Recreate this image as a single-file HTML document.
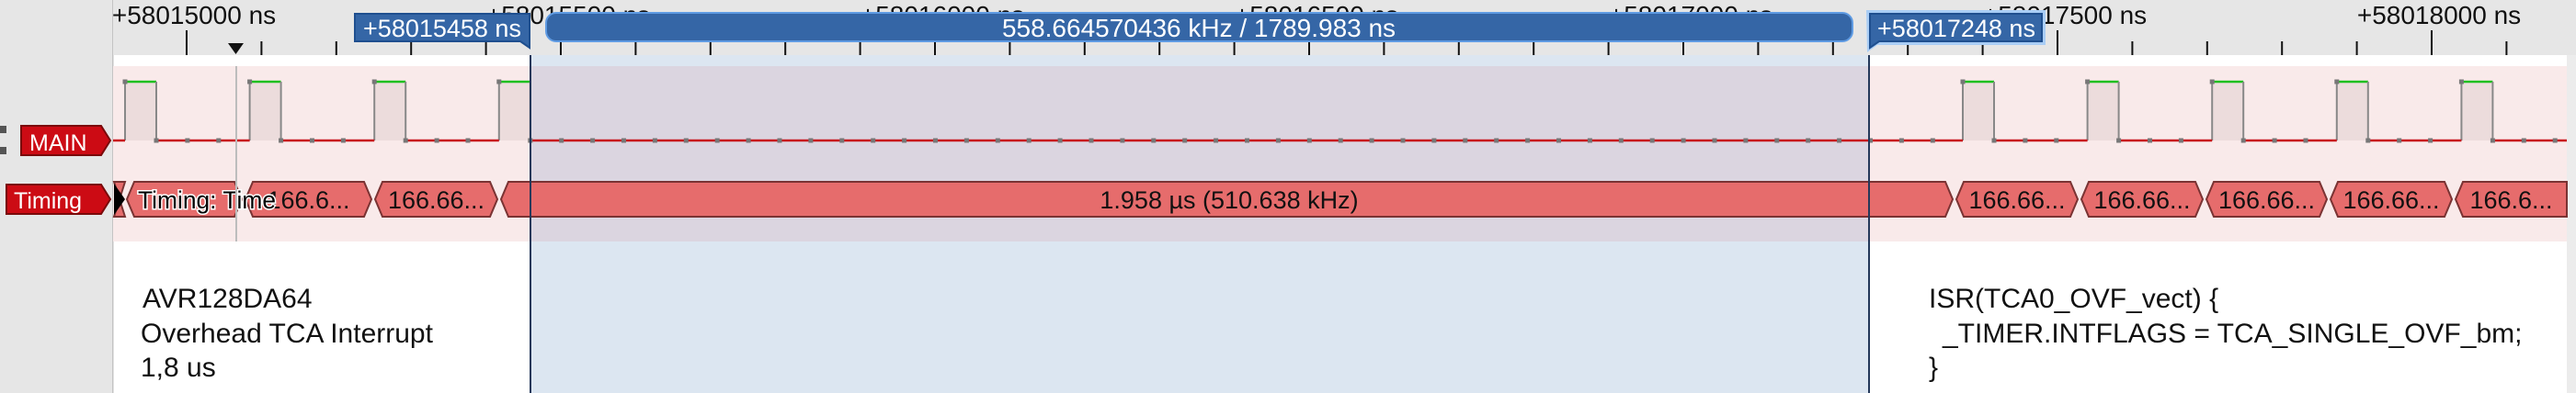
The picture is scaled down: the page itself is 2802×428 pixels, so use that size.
<!DOCTYPE html>
<html><head><meta charset="utf-8"><style>
html,body{margin:0;padding:0;width:2802px;height:428px;overflow:hidden;background:#fff}
svg{display:block;font-family:"Liberation Sans",sans-serif}
</style></head><body>
<svg id="s" width="2802" height="428" xmlns="http://www.w3.org/2000/svg">
<rect width="2802" height="428" fill="#fff"/>
<rect x="0" y="0" width="123" height="428" fill="#e6e6e6"/>
<rect x="122" y="0" width="1.5" height="428" fill="#c4c4c4"/>
<rect x="123" y="0" width="2679" height="60" fill="#e6e6e6"/>
<rect x="2792" y="60" width="10" height="368" fill="#ececec"/>
<rect x="123" y="72" width="2669" height="191" fill="#f9eaea"/>
<rect x="577" y="60" width="1456" height="368" fill="#dce6f1"/>
<rect x="577" y="72" width="1456" height="191" fill="#dbd5e0"/>
<g id="ticks"></g>
<g id="sig"></g>
<rect x="0" y="137" width="7" height="8" fill="#555"/>
<rect x="0" y="160" width="7" height="8" fill="#555"/>
<path d="M23 137 H110 L120 153 L110 169 H23 Z" fill="#cc0b14" stroke="#7a0a0a" stroke-width="2"/>
<text x="32" y="164" font-size="25" fill="#fff">MAIN</text>
<path d="M7 201 H110 L120 217 L110 233 H7 Z" fill="#cc0b14" stroke="#7a0a0a" stroke-width="2"/>
<text x="15" y="227" font-size="25" fill="#fff">Timing</text>
<g id="tim"></g>
<g id="timt"></g>
<rect x="256" y="72" width="2" height="191" fill="#bdbdbd"/>
<path d="M248 47 H265 L256.5 59 Z" fill="#111"/>
<rect x="576" y="60" width="2" height="368" fill="#24385a"/>
<rect x="2032" y="60" width="2" height="368" fill="#24385a"/>
<rect x="594" y="14" width="1421" height="31" rx="11" fill="#3566a6" stroke="#5f9be3" stroke-width="2"/>
<text x="1304" y="40" font-size="28" fill="#fff" text-anchor="middle">558.664570436 kHz / 1789.983 ns</text>
<path d="M386 15 H576 V52 L566 45 H386 Z" fill="#3566a6" stroke="#1f4f8f" stroke-width="2"/>
<text x="481" y="40" font-size="27" fill="#fff" text-anchor="middle">+58015458 ns</text>
<path d="M2030 11 H2225 V49 H2042 L2031 57 Z" fill="#a9cdf5"/>
<path d="M2034 15 H2221 V45 H2044 L2034 52 Z" fill="#3566a6" stroke="#1f4f8f" stroke-width="2"/>
<text x="2128" y="40" font-size="27" fill="#fff" text-anchor="middle">+58017248 ns</text>
<g font-size="30" fill="#111">
<text x="155" y="335">AVR128DA64</text>
<text x="153" y="373">Overhead TCA Interrupt</text>
<text x="153" y="410">1,8 us</text>
<text x="2098" y="335">ISR(TCA0_OVF_vect) {</text>
<text x="2113" y="373">_TIMER.INTFLAGS = TCA_SINGLE_OVF_bm;</text>
<text x="2098" y="410">}</text>
</g>
</svg>
<script>
var NS="http://www.w3.org/2000/svg";
function el(p,t,a,txt){var e=document.createElementNS(NS,t);for(var k in a)e.setAttribute(k,a[k]);if(txt!=null)e.textContent=txt;document.getElementById(p).appendChild(e);return e;}
for(var i=-1;i<40;i++){var x=203+i*81.4;if(x<124||x>2790)continue;var maj=((i%5)+5)%5==0;
el("ticks","rect",{x:x-1,y:maj?33:45,width:2,height:maj?27:15,fill:"#111"});}
for(var j=0;j<7;j++){var x=203+j*407;if(x>2790)continue;el("ticks","text",{x:x+8,y:26,"font-size":28,fill:"#111","text-anchor":"middle"},"+"+(58015000+j*500)+" ns");}
var P=[136,271.6,407.2,542.8,2135,2270.6,2406.2,2541.8,2677.4],W=34,HY=89,LY=153;
for(var i=0;i<P.length;i++){var a=P[i],b=a+W;
el("sig","rect",{x:a,y:HY,width:W,height:LY-HY,fill:"#ecdcdc"});
el("sig","line",{x1:a,y1:HY,x2:b,y2:HY,stroke:"#1fbf1f","stroke-width":2.5});
el("sig","line",{x1:a,y1:HY,x2:a,y2:LY,stroke:"#888","stroke-width":2});
el("sig","line",{x1:b,y1:HY,x2:b,y2:LY,stroke:"#888","stroke-width":2});}
var segs=[[123,136]];for(var i=0;i<P.length;i++){segs.push([P[i]+W,i+1<P.length?P[i+1]:2792]);}
segs.forEach(function(s){el("sig","line",{x1:s[0],y1:LY,x2:s[1],y2:LY,stroke:"#c8101a","stroke-width":2.5});});
for(var i=0;i<P.length;i++)el("sig","rect",{x:P[i]-2.5,y:HY-2.5,width:5,height:5,fill:"#777"});
segs.forEach(function(s){for(var x=s[0];x<s[1]-5;x+=33.9){if(x<130)continue;el("sig","rect",{x:x-2.5,y:LY-2.5,width:5,height:5,fill:"#777"});}});
var B=[[136,265,"Timing: Time"],[265,406,"166.6..."],[406,543,"166.66..."],[543,2126,"1.958 µs (510.638 kHz)"],[2126,2262,"166.66..."],[2262,2398,"166.66..."],[2398,2533,"166.66..."],[2533,2669,"166.66..."],[2669,2800,"166.6..."]];
el("tim","path",{d:"M124 198 L130 217 L124 236 L136 236 L130 217 L136 198 Z",fill:"#e66c6c",stroke:"#7a3333","stroke-width":2});
el("tim","path",{d:"M124 200 L136 217 L124 234 Z",fill:"#000"});
B.forEach(function(b,i){var a=b[0]+2,c=b[1]-2,dd;
if(c>2790)dd="M"+a+" 217 L"+(a+8)+" 198 H2792 V236 H"+(a+8)+" Z";
else dd="M"+a+" 217 L"+(a+8)+" 198 H"+(c-8)+" L"+c+" 217 L"+(c-8)+" 236 H"+(a+8)+" Z";
el("tim","path",{d:dd,fill:"#e66c6c",stroke:"#7a3333","stroke-width":2});
if(i==0){el("timt","text",{x:a+12,y:227,"font-size":27,fill:"#000",stroke:"#fff","stroke-width":3,"paint-order":"stroke","textLength":150,"lengthAdjust":"spacingAndGlyphs"},b[2]);}
else if(i==3){el("tim","text",{x:1337,y:227,"font-size":27,fill:"#111","text-anchor":"middle"},b[2]);}
else{el("tim","text",{x:(a+Math.min(c,2792))/2,y:227,"font-size":27,fill:"#111","text-anchor":"middle"},b[2]);}
});
</script>
</body></html>
